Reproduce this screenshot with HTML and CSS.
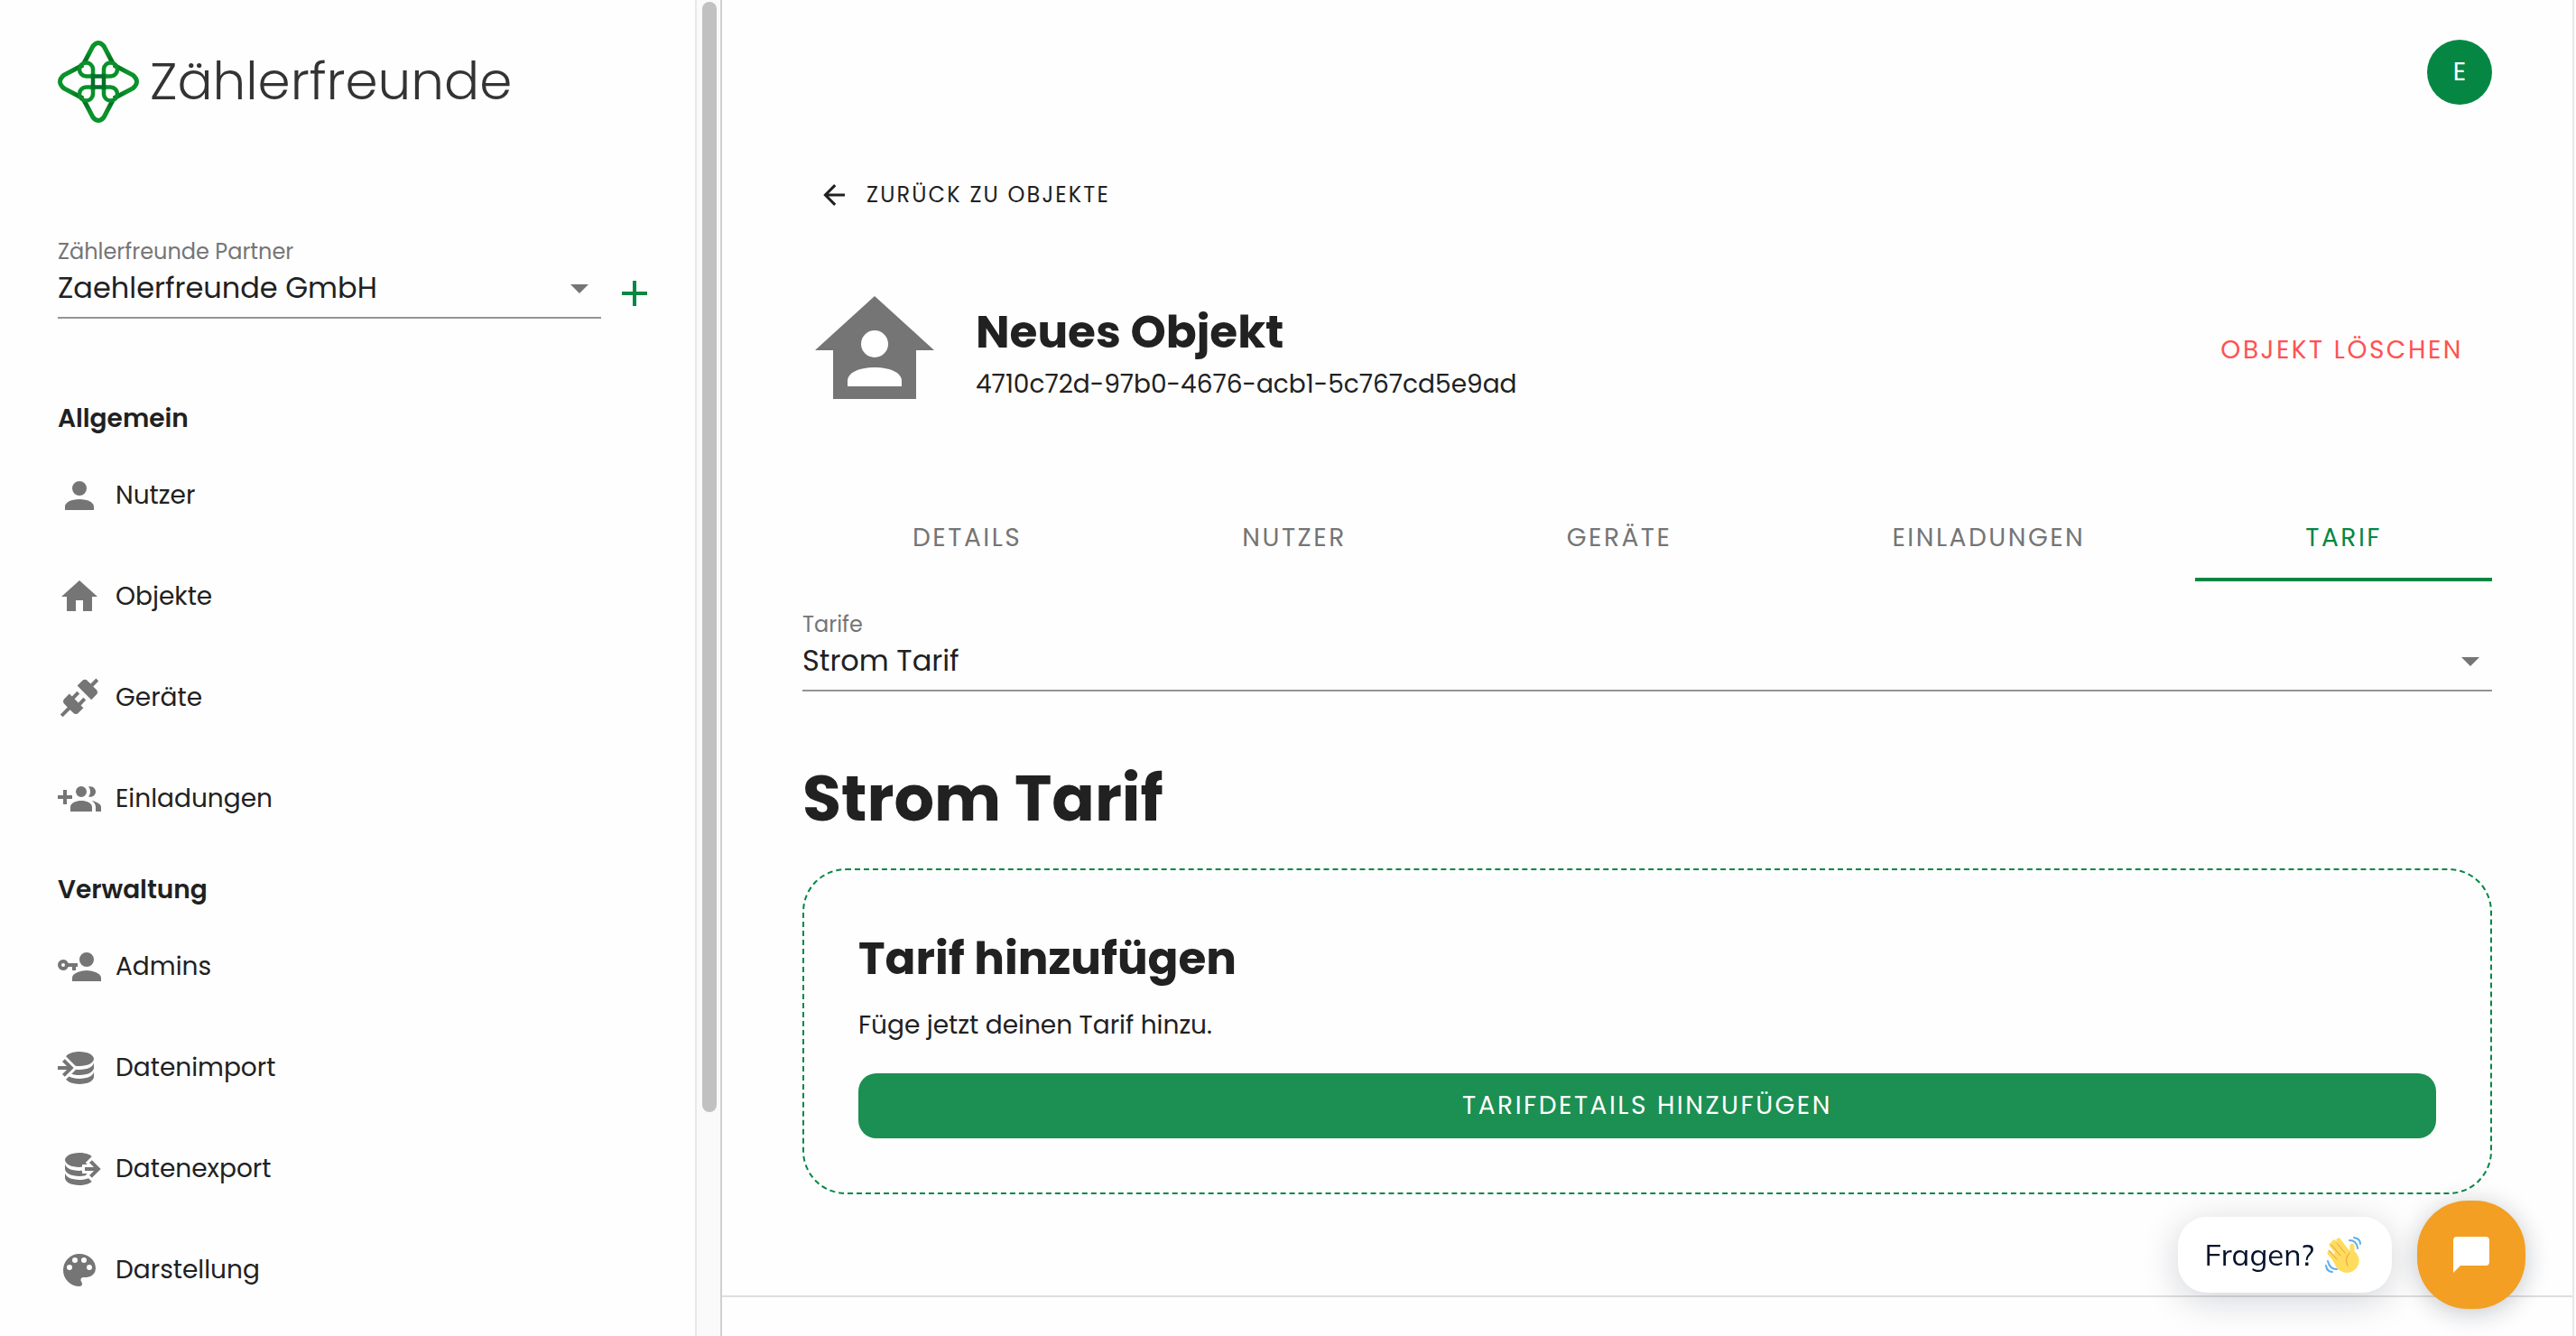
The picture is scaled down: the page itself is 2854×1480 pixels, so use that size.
FILE: index.html
```html
<!DOCTYPE html>
<html lang="de">
<head>
<meta charset="utf-8">
<title>Zählerfreunde – Tarif</title>
<link rel="stylesheet" href="styles.css">
</head>
<body>
<div class="app">
  <aside class="sidebar">
    <div class="sidebar-content">
      <a class="logo" href="#" aria-label="Zählerfreunde">
        <svg class="logo-mark" viewBox="0 0 90 91" fill="none">
          <defs>
            <linearGradient id="leafTop" x1="0" y1="0" x2="0" y2="1"><stop offset=".4" stop-color="#0a932b"/><stop offset="1" stop-color="#04641f"/></linearGradient>
            <linearGradient id="leafBottom" x1="0" y1="1" x2="0" y2="0"><stop offset=".4" stop-color="#0a932b"/><stop offset="1" stop-color="#04641f"/></linearGradient>
            <linearGradient id="leafLeft" x1="0" y1="0" x2="1" y2="0"><stop offset=".4" stop-color="#0a932b"/><stop offset="1" stop-color="#04641f"/></linearGradient>
            <linearGradient id="leafRight" x1="1" y1="0" x2="0" y2="0"><stop offset=".4" stop-color="#0a932b"/><stop offset="1" stop-color="#04641f"/></linearGradient>
          </defs>
          <g stroke-width="5">
            <path stroke="url(#leafTop)" d="M29 25 39 6Q45-1 51 6L61 25"/>
            <path stroke="url(#leafBottom)" d="M29 66 39 85Q45 92 51 85L61 66"/>
            <path stroke="url(#leafLeft)" d="M28 27 7 38Q-2 45.500 7 53L28 64"/>
            <path stroke="url(#leafRight)" d="M62 27 83 38Q92 45.500 83 53L62 64"/>
          </g>
          <path stroke="#04702a" stroke-width="4.500" d="M39 36V55M51 36V55M36 39.500H54M36 51.500H54"/>
          <g stroke="#089129" stroke-width="4.500">
            <path d="M39 37V31.500A7.500 7.500 0 1 0 31.500 39.500H37"/>
            <path d="M51 37V31.500A7.500 7.500 0 1 1 58.500 39.500H53"/>
            <path d="M39 54V59.500A7.500 7.500 0 1 1 31.500 51.500H37"/>
            <path d="M51 54V59.500A7.500 7.500 0 1 0 58.500 51.500H53"/>
          </g>
        </svg>
        <span class="logo-text">Zählerfreunde</span>
      </a>

      <div class="partner">
        <div class="field">
          <label for="partner">Zählerfreunde Partner</label>
          <div class="select-wrap">
            <select id="partner"><option>Zaehlerfreunde GmbH</option></select>
          </div>
        </div>
        <button class="add" type="button" aria-label="Partner hinzufügen">
          <svg viewBox="0 0 28 28"><path fill="currentColor" d="M12 0h4v12h12v4H16v12h-4V16H0v-4h12z"/></svg>
        </button>
      </div>

      <nav>
        <h2>Allgemein</h2>
        <ul>
          <li><a href="#"><svg viewBox="0 0 24 24"><path d="M12 4a4 4 0 1 1 0 8 4 4 0 0 1 0-8m0 10c4.420 0 8 1.790 8 4v2H4v-2c0-2.210 3.580-4 8-4Z"/></svg>Nutzer</a></li>
          <li><a href="#"><svg viewBox="0 0 24 24"><path d="M10 20v-6h4v6h5v-8h3L12 3 2 12h3v8z"/></svg>Objekte</a></li>
          <li><a href="#"><svg viewBox="0 0 24 24"><path d="M21.400 7.500c.8.800.8 2.100 0 2.800l-2.800 2.800-7.800-7.800 2.800-2.800c.8-.8 2.100-.8 2.800 0l1.800 1.800 3-3 1.400 1.400-3 3zm-5.800 5.800-1.400-1.400-2.800 2.800-2.100-2.100 2.800-2.800-1.400-1.400-2.800 2.800-1.500-1.400-2.800 2.800c-.8.800-.8 2.100 0 2.800l1.800 1.800-4 4 1.400 1.400 4-4 1.800 1.800c.8.800 2.100.8 2.800 0l2.800-2.800-1.400-1.400z"/></svg>Geräte</a></li>
          <li><a href="#"><svg viewBox="0 0 24 24"><path d="M13 11a3 3 0 1 1 0-6 3 3 0 0 1 0 6M8 10H5V7H3v3H0v2h3v3h2v-3h3zm11 3c1.330.4 5 1.500 5 3.500V19h-3v-2.500c0-1.500-.9-2.600-2-3.500m-2-2.300c.7-.8 1-1.700 1-2.700s-.3-1.900-1-2.700c2.200-.8 4 .9 4 2.700s-1.800 3.500-4 2.700M19 16.500V19H7v-2.500c0-2.300 3.300-3.500 6-3.500s6 1.200 6 3.500"/></svg>Einladungen</a></li>
        </ul>
        <h2>Verwaltung</h2>
        <ul>
          <li><a href="#"><svg viewBox="0 0 24 24"><path d="M11,10V12H10V14H8V12H5.83C5.42,13.17 4.31,14 3,14A3,3 0 0,1 0,11A3,3 0 0,1 3,8C4.31,8 5.42,8.83 5.83,10H11M3,10A1,1 0 0,0 2,11A1,1 0 0,0 3,12A1,1 0 0,0 4,11A1,1 0 0,0 3,10M16,14C18.67,14 24,15.34 24,18V20H8V18C8,15.34 13.33,14 16,14M16,12A4,4 0 0,1 12,8A4,4 0 0,1 16,4A4,4 0 0,1 20,8A4,4 0 0,1 16,12Z"/></svg>Admins</a></li>
          <li><a href="#"><svg viewBox="0 0 24 24"><path d="M12,3C8.59,3 5.69,4.07 4.54,5.57L9.79,10.82C10.5,10.93 11.22,11 12,11C16.42,11 20,9.21 20,7C20,4.79 16.42,3 12,3M3.92,7.08L2.5,8.5L5,11H0V13H5L2.5,15.5L3.92,16.92L8.84,12M20,9C20,11.21 16.42,13 12,13C11.34,13 10.7,12.95 10.09,12.87L7.62,15.34C8.88,15.75 10.38,16 12,16C16.42,16 20,14.21 20,12M20,14C20,16.21 16.42,18 12,18C9.72,18 7.67,17.5 6.21,16.75L4.53,18.43C5.68,19.93 8.59,21 12,21C16.42,21 20,19.21 20,17"/></svg>Datenimport</a></li>
          <li><a href="#"><svg viewBox="0 0 24 24"><path d="M12,3C7.58,3 4,4.79 4,7C4,9.21 7.58,11 12,11C12.5,11 13,10.97 13.5,10.92V9.5H16.39L15.39,8.5L18.9,5C17.5,3.8 14.94,3 12,3M18.92,7.08L17.5,8.5L20,11H15V13H20L17.5,15.5L18.92,16.92L23.84,12M4,9V12C4,14.21 7.58,16 12,16C13.17,16 14.26,15.85 15.25,15.63L16.38,14.5H13.5V12.92C13,12.97 12.5,13 12,13C7.58,13 4,11.21 4,9M4,14V17C4,19.21 7.58,21 12,21C14.94,21 17.5,20.2 18.9,19L17,17.1C15.61,17.66 13.9,18 12,18C7.58,18 4,16.21 4,14Z"/></svg>Datenexport</a></li>
          <li><a href="#"><svg viewBox="0 0 24 24"><path d="M17.5,12A1.5,1.5 0 0,1 16,10.5A1.5,1.5 0 0,1 17.5,9A1.5,1.5 0 0,1 19,10.5A1.5,1.5 0 0,1 17.5,12M14.5,8A1.5,1.5 0 0,1 13,6.5A1.5,1.5 0 0,1 14.5,5A1.5,1.5 0 0,1 16,6.5A1.5,1.5 0 0,1 14.5,8M9.5,8A1.5,1.5 0 0,1 8,6.5A1.5,1.5 0 0,1 9.5,5A1.5,1.5 0 0,1 11,6.5A1.5,1.5 0 0,1 9.5,8M6.5,12A1.5,1.5 0 0,1 5,10.5A1.5,1.5 0 0,1 6.5,9A1.5,1.5 0 0,1 8,10.5A1.5,1.5 0 0,1 6.5,12M12,3A9,9 0 0,0 3,12A9,9 0 0,0 12,21A1.5,1.5 0 0,0 13.5,19.5C13.5,19.11 13.35,18.76 13.11,18.5C12.88,18.23 12.73,17.88 12.73,17.5A1.5,1.5 0 0,1 14.23,16H16A5,5 0 0,0 21,11C21,6.58 16.97,3 12,3Z"/></svg>Darstellung</a></li>
        </ul>
      </nav>
    </div>
    <div class="scrollbar"><div class="thumb"></div></div>
  </aside>

  <div class="page">
    <main>
      <header><button class="avatar" type="button">E</button></header>
      <a class="back" href="#">
        <svg viewBox="0 0 24 24"><path fill="currentColor" d="M20,11V13H8L13.5,18.5L12.08,19.92L4.16,12L12.08,4.08L13.5,5.5L8,11H20Z"/></svg>
        ZURÜCK ZU OBJEKTE
      </a>
      <section class="object">
        <svg class="object-icon" viewBox="0 0 132 114"><path fill="#757575" d="M66 0 132 60H112V114H20V60H0z"/><circle cx="66" cy="53" r="15" fill="#fff"/><path fill="#fff" d="M36 100V94C36 74 96 74 96 94V100z"/></svg>
        <div class="object-text">
          <h1>Neues Objekt</h1>
          <p>4710c72d-97b0-4676-acb1-5c767cd5e9ad</p>
        </div>
        <button class="delete" type="button">OBJEKT LÖSCHEN</button>
      </section>
      <div class="tabs" role="tablist">
        <button type="button" role="tab">DETAILS</button>
        <button type="button" role="tab">NUTZER</button>
        <button type="button" role="tab">GERÄTE</button>
        <button type="button" role="tab">EINLADUNGEN</button>
        <button type="button" role="tab" class="active" aria-selected="true">TARIF</button>
      </div>
      <div class="field">
        <label for="tarife">Tarife</label>
        <div class="select-wrap">
          <select id="tarife"><option>Strom Tarif</option></select>
        </div>
      </div>
      <h2 class="title">Strom Tarif</h2>
      <section class="card">
        <h3>Tarif hinzufügen</h3>
        <p>Füge jetzt deinen Tarif hinzu.</p>
        <button class="primary" type="button">TARIFDETAILS HINZUFÜGEN</button>
      </section>
    </main>
    <footer></footer>
  </div>
</div>

<div class="chat">
  <button class="chat-label" type="button">Fragen?
    <svg viewBox="0 0 40 40">
      <g fill="none" stroke="#ffdc5d" stroke-width="5" stroke-linecap="round"><path d="M5 18 17 32M7 9 21 27M10 6 24 24M15 4 28 21M30 10V20"/></g>
      <path fill="#ffdc5d" d="M6 22 15 15 25 16 31 14Q40 23 37 30C34 42 18 43 12 33z"/>
      <g fill="none" stroke="#ef9645" stroke-width="1" stroke-linecap="round"><path d="M4 15 13 25M7 9 17 21M13 7 22 18M27 18Q21 24 25 32"/></g>
      <g fill="none" stroke="#5dadec" stroke-width="2" stroke-linecap="round"><path d="M27 4Q35 4 36 13M32 1Q39 2 39 8M3 27Q5 36 13 36M1 32Q2 39 8 39"/></g>
    </svg>
  </button>
  <button class="chat-button" type="button" aria-label="Chat öffnen">
    <svg viewBox="0 0 40 40"><path fill="#fff" d="M4 0H36Q40 0 40 4V28Q40 32 36 32H8L0 40V4Q0 0 4 0z"/></svg>
  </button>
</div>
</body>
</html>
```
FILE: styles.css
```css
* { box-sizing: border-box; }
body, h1, h2, h3, p, ul { margin: 0; padding: 0; }
body {
  font-family: Poppins, Inter, sans-serif;
  font-size: 28px;
  line-height: 40px;
  color: #212121;
  background: #fefefe;
  overflow: hidden;
}
button, select { font: inherit; color: inherit; background: none; border: 0; padding: 0; margin: 0; }
a { color: inherit; text-decoration: none; }
svg { display: block; flex: none; }

.app { display: flex; height: 100vh; }
.sidebar { display: flex; flex: none; width: 800px; border-right: 2px solid #d0d0d0; overflow: hidden; }
.sidebar-content { flex: 1; padding: 42px 48px 0 64px; }
.scrollbar { width: 28px; padding: 2px 4px 2px 6px; background: #fafafa; border-left: 2px solid #e8e8e8; }
.thumb { height: 1230px; border-radius: 8px; background: #c1c1c1; }

.logo { display: flex; align-items: center; gap: 12px; height: 96px; }
.logo-mark { width: 90px; height: 91px; }
.logo-text { font-weight: 300; font-size: 58px; line-height: 72px; color: #333; }

.partner { display: flex; align-items: flex-end; gap: 23px; margin-top: 125px; }
.partner .field { flex: 1; }
.field label { display: block; font-size: 24px; line-height: 32px; color: #757575; }
.select-wrap { position: relative; }
.select-wrap::after {
  content: "";
  position: absolute;
  right: 14px;
  top: 20px;
  border: 10px solid transparent;
  border-top-color: #757575;
  border-bottom: 0;
}
select {
  display: block;
  appearance: none;
  width: 100%;
  height: 58px;
  padding-bottom: 8px;
  font-size: 32px;
  border-bottom: 2px solid #949494;
}
.add { width: 28px; height: 28px; margin: 0 5px 14px 0; color: #058743; }

nav { margin-top: 91px; }
nav h2 { margin-bottom: 41px; font-size: 28px; line-height: 40px; font-weight: 600; }
nav ul { display: flex; flex-direction: column; gap: 64px; list-style: none; }
nav ul + h2 { margin-top: 57px; }
nav li a { display: flex; align-items: center; gap: 16px; height: 48px; }
nav li svg { width: 48px; height: 48px; fill: #757575; }

.page { flex: 1; display: flex; flex-direction: column; margin-right: 2px; border-right: 2px solid #e7e7e7; }
main { flex: 1; padding: 44px 89px 0 89px; }
footer { height: 45px; border-top: 2px solid #dedede; }
header { display: flex; justify-content: flex-end; }
.avatar { width: 72px; height: 72px; border-radius: 50%; background: #058743; color: #fff; }
.back { display: flex; align-items: center; gap: 18px; width: max-content; height: 40px; margin: 80px 0 0 17px; font-size: 24px; letter-spacing: 0.09em; }
.back svg { width: 36px; height: 36px; }

.object { display: flex; margin-top: 92px; padding: 0 32px 0 14px; }
.object-icon { width: 132px; height: 114px; }
.object-text { flex: 1; margin-left: 46px; padding-top: 8px; }
h1, h3 { font-size: 50px; line-height: 64px; font-weight: 700; }
.object-text p { margin-top: 6px; }
.delete { padding-top: 2px; color: #ff5252; letter-spacing: 0.09em; }

.tabs { display: flex; margin-top: 102px; }
.tabs button { flex: 1 1 auto; height: 96px; padding: 4px 32px 0; letter-spacing: 0.09em; color: #757575; border-bottom: 4px solid transparent; }
.tabs .active { color: #058743; border-color: #058743; }
main > .field { margin-top: 32px; }
.title { margin-top: 71px; font-size: 70px; line-height: 96px; font-weight: 700; }
.card { margin-top: 29px; padding: 66px 60px 60px; border: 2px dashed #058743; border-radius: 48px; }
.card p { margin-top: 22px; }
.primary { display: block; width: 100%; height: 72px; margin-top: 33px; border-radius: 20px; background: #1c8f52; color: #fff; letter-spacing: 0.09em; }

.chat { position: fixed; right: 56px; bottom: 30px; display: flex; align-items: center; gap: 28px; font-family: Mulish, Muli, Nunito, "Open Sans", sans-serif; }
.chat-label { display: flex; align-items: center; gap: 12px; height: 84px; padding: 0 34px 0 30px; border-radius: 32px; background: #fff; color: #06132b; font-size: 33px; box-shadow: 0 8px 40px rgba(6, 19, 43, 0.18); }
.chat-label svg { width: 40px; height: 40px; }
.chat-button { display: flex; align-items: center; justify-content: center; width: 120px; height: 120px; border-radius: 56px; background: #f39f23; box-shadow: 0 4px 28px rgba(6, 19, 43, 0.24); }
.chat-button svg { width: 40px; height: 40px; }
```
